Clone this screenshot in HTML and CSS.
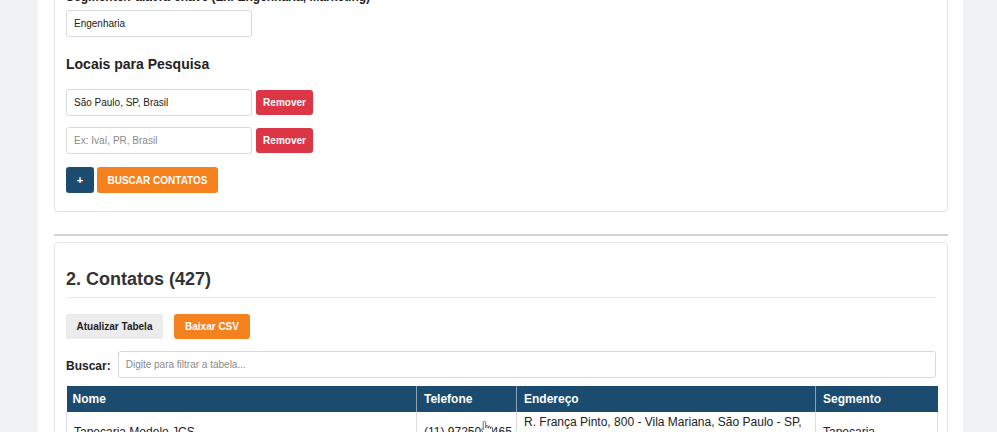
FILE: index.html
```html
<!DOCTYPE html>
<html lang="pt-BR">
<head>
<meta charset="utf-8">
<title>Contatos</title>
<link rel="stylesheet" href="styles.css">
</head>
<body>
<div class="page">
  <section class="card card-form">
    <div class="field-label">Segmento/Palavra-chave (Ex: Engenharia, Marketing)</div>
    <input class="text-input" type="text" value="Engenharia" spellcheck="false">
    <h3 class="sub-title">Locais para Pesquisa</h3>
    <div class="loc-list">
      <div class="loc-row">
        <input class="text-input" type="text" value="São Paulo, SP, Brasil" spellcheck="false">
        <button class="btn btn-red">Remover</button>
      </div>
      <div class="loc-row">
        <input class="text-input" type="text" placeholder="Ex: Ivaí, PR, Brasil" spellcheck="false">
        <button class="btn btn-red">Remover</button>
      </div>
    </div>
    <div class="actions">
      <button class="btn btn-blue btn-plus">+</button>
      <button class="btn btn-orange btn-search">BUSCAR CONTATOS</button>
    </div>
  </section>

  <hr class="divider">

  <section class="card card-table">
    <h2 class="section-title">2. Contatos (427)</h2>
    <div class="toolbar">
      <button class="btn btn-light">Atualizar Tabela</button>
      <button class="btn btn-orange">Baixar CSV</button>
    </div>
    <div class="search-row">
      <label class="search-label">Buscar:</label>
      <input class="text-input search-input" type="text" placeholder="Digite para filtrar a tabela..." spellcheck="false">
    </div>
    <table class="contacts">
      <colgroup>
        <col class="c-name"><col class="c-phone"><col class="c-addr"><col class="c-seg">
      </colgroup>
      <thead>
        <tr><th>Nome</th><th>Telefone</th><th>Endereço</th><th>Segmento</th></tr>
      </thead>
      <tbody>
        <tr>
          <td class="mid">Tapeçaria Modelo JCS</td>
          <td class="mid"><span class="phone">(11) 97250-9465<svg class="cursor" viewBox="0 0 16 20" width="13" height="17"><path d="M5.5 1.2c.8 0 1.5.6 1.5 1.4V9h.3V7.6c0-.8.6-1.3 1.3-1.3s1.3.5 1.3 1.3V9.5h.3V8.4c0-.7.6-1.2 1.3-1.2s1.2.5 1.2 1.2v1.6h.3v-.6c0-.7.5-1.2 1.2-1.2s1.2.5 1.2 1.2v4.6c0 2.4-1.6 4.3-4 4.3H8.4c-1.3 0-2.3-.6-3-1.6L2 12.3c-.4-.6-.3-1.4.3-1.8.6-.4 1.3-.3 1.8.2L4 11V2.6c0-.8.7-1.4 1.5-1.4z" fill="#fff" stroke="#333" stroke-width="0.9"/></svg></span></td>
          <td class="addr">R. França Pinto, 800 - Vila Mariana, São Paulo - SP, 04016-001, Brasil</td>
          <td class="mid">Tapeçaria</td>
        </tr>
      </tbody>
    </table>
  </section>
</div>
</body>
</html>
```

FILE: styles.css
```css
* { box-sizing: border-box; }

html, body {
  margin: 0;
  padding: 0;
}

body {
  background: #f1f2f4;
  font-family: "Liberation Sans", Arial, sans-serif;
  color: #222;
  overflow: hidden;
}

.page {
  width: 925px;
  margin: -22px 0 0 38px;
  padding: 0 15px 40px 16px;
  background: #fff;
  min-height: 600px;
}

.card {
  background: #fff;
  border: 1px solid #e3e4e6;
  border-radius: 4px;
  padding: 0 11px;
  box-shadow: 0 1px 1px rgba(0,0,0,0.03);
}

.card-form {
  padding-top: 11px;
  padding-bottom: 18px;
}

.field-label {
  font-size: 12px;
  line-height: 15px;
  font-weight: bold;
  color: #222;
}

.text-input {
  display: block;
  width: 186px;
  height: 27px;
  border: 1px solid #d9dadc;
  border-radius: 3px;
  padding: 0 7px;
  font-family: "Liberation Sans", Arial, sans-serif;
  font-size: 10px;
  color: #222;
  background: #fff;
  outline: none;
}

.text-input::placeholder { color: #8a8a8a; }

.card-form > .text-input { margin-top: 5px; }

.sub-title {
  margin: 19px 0 0;
  font-size: 14px;
  line-height: 16px;
  font-weight: bold;
  color: #222;
}

.loc-list {
  margin-top: 17px;
  display: flex;
  flex-direction: column;
  gap: 11px;
}

.loc-row {
  display: flex;
  align-items: center;
  gap: 4px;
}

.btn {
  height: 25px;
  border: none;
  border-radius: 3px;
  padding: 0 10px;
  font-family: "Liberation Sans", Arial, sans-serif;
  font-size: 10px;
  font-weight: bold;
  cursor: pointer;
  line-height: 25px;
}

.btn-red {
  background: #dc3545;
  color: #fff;
  width: 57px;
  padding: 0;
}

.btn-blue {
  background: #1b4c70;
  color: #fff;
}

.btn-orange {
  background: #f5821f;
  color: #fff;
}

.btn-light {
  background: #ececec;
  color: #222;
  border-radius: 0;
}

.actions {
  margin-top: 13px;
  display: flex;
  gap: 3px;
}

.actions .btn { height: 26px; }

.btn-plus {
  width: 28px;
  padding: 0;
  font-size: 11px;
}

.btn-search {
  width: 121px;
  padding: 0;
}

.divider {
  border: none;
  border-top: 2px solid #d2d3d5;
  margin: 22px 0 6px;
  height: 0;
}

.card-table {
  padding-top: 25px;
  padding-bottom: 20px;
}

.section-title {
  margin: 0;
  font-size: 18px;
  line-height: 22px;
  font-weight: bold;
  color: #333;
  padding-bottom: 7px;
  border-bottom: 1px solid #e6e7e9;
}

.toolbar {
  margin-top: 16px;
  display: flex;
  gap: 11px;
}

.toolbar .btn-light { width: 97px; padding: 0; }
.toolbar .btn-orange { width: 76px; padding: 0; }

.search-row {
  margin-top: 12px;
  display: flex;
  align-items: center;
  gap: 7px;
}

.search-label {
  font-size: 12px;
  font-weight: bold;
  color: #222;
  padding-top: 3px;
}

.search-input {
  flex: 1;
  width: auto;
}

.contacts {
  margin-top: 8px;
  width: 871px;
  border-collapse: collapse;
  table-layout: fixed;
  font-size: 12px;
}

.c-name { width: 350px; }
.c-phone { width: 100px; }
.c-addr { width: 299px; }
.c-seg { width: 122px; }

.contacts th {
  background: #1b4c70;
  color: #fff;
  text-align: left;
  font-weight: bold;
  height: 26px;
  padding: 0 7px;
  border-left: 1px solid #8aa2b6;
  line-height: 14px;
}

.contacts th:first-child { border-left: none; padding-left: 6px; }

.contacts td {
  padding: 0 7px;
  line-height: 20px;
  border-left: 1px solid #dcdcdc;
  border-right: 1px solid #dcdcdc;
  color: #222;
}

.contacts td.mid {
  vertical-align: middle;
}

.contacts td.addr {
  vertical-align: top;
}

.phone {
  position: relative;
  white-space: nowrap;
}

.cursor {
  position: absolute;
  left: 56px;
  top: -5px;
}
```
